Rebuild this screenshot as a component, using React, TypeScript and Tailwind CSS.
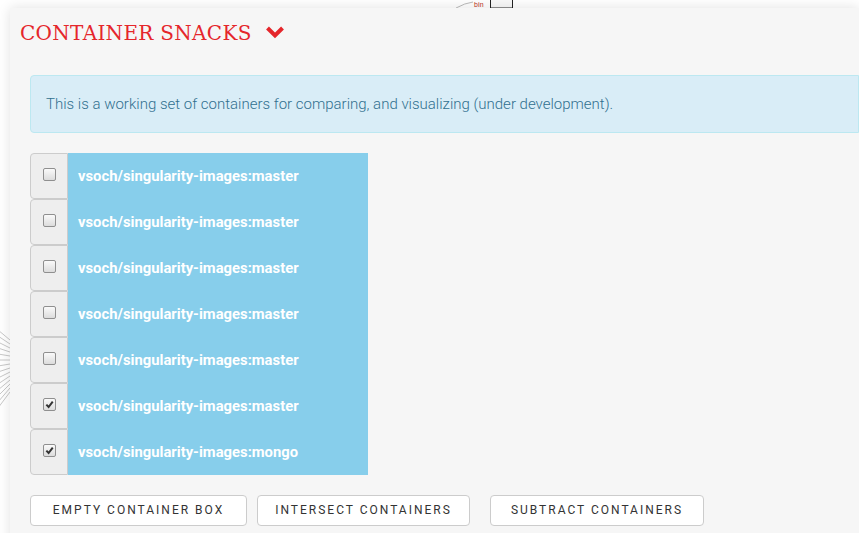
import React from "react";

const containers = [
  { name: "vsoch/singularity-images:master", checked: false },
  { name: "vsoch/singularity-images:master", checked: false },
  { name: "vsoch/singularity-images:master", checked: false },
  { name: "vsoch/singularity-images:master", checked: false },
  { name: "vsoch/singularity-images:master", checked: false },
  { name: "vsoch/singularity-images:master", checked: true },
  { name: "vsoch/singularity-images:mongo", checked: true },
];

function Box({ checked }: { checked: boolean }) {
  return (
    <span className="flex h-[13px] w-[13px] items-center justify-center rounded-[2px] border border-[#8f8f8f] bg-gradient-to-b from-[#fafafa] to-[#dcdcdc]">
      {checked && (
        <svg width="9" height="9" viewBox="0 0 10 10">
          <path d="M1.5 5.2 L4 7.8 L8.6 1.8" fill="none" stroke="#333" strokeWidth="2.2" />
        </svg>
      )}
    </span>
  );
}

export default function App() {
  return (
    <div className="relative h-[533px] w-[859px] overflow-hidden bg-white" style={{ fontFamily: "Roboto, 'Noto Sans', sans-serif" }}>
      {/* bits of the graph drawn behind the panel */}
      <svg className="absolute left-0 top-0" width="859" height="533">
        <path d="M456 8 Q465 3 473 2" stroke="#bbb" strokeWidth="1" fill="none" />
        <text x="474" y="6.5" fontSize="7" fill="#c0392b" fontFamily="Roboto">bin</text>
        <rect x="490.5" y="-4" width="22" height="12" fill="#f8f8f8" stroke="#222" strokeWidth="1" />
        {Array.from({ length: 14 }).map((_, i) => (
          <line key={i} x1="10" y1={340 + i * 4} x2="-2" y2={330 + i * 6} stroke="#c8c8c8" strokeWidth="1" />
        ))}
      </svg>

      <div className="relative ml-[10px] mt-[8px] h-[600px] bg-[#f6f6f6] pl-[10px] pt-[10px] shadow-[0_0_12px_rgba(0,0,0,0.12)]">
        <div className="flex items-center gap-[13px]">
          <h2 className="text-[20px] uppercase tracking-[0.3px] text-[#e5262b]" style={{ fontFamily: "'DejaVu Serif', 'Liberation Serif', serif" }}>
            Container Snacks
          </h2>
          <svg width="20" height="14" viewBox="0 0 20 14" className="mt-[-2px]">
            <path d="M2.5 3 L10 10.5 L17.5 3" fill="none" stroke="#e5262b" strokeWidth="4" />
          </svg>
        </div>

        <div className="ml-[10px] mt-[27px] flex h-[58px] items-center rounded-l-[4px] border border-[#bce8f1] bg-[#d9edf7] pl-[15px] text-[15px] font-light text-[#31708f]">
          This is a working set of containers for comparing, and visualizing (under development).
        </div>

        <div className="ml-[10px] mt-[20px] flex w-[338px] flex-col">
          {containers.map((c, i) => (
            <div key={i} className="flex h-[46px]">
              <div className="flex w-[38px] items-center justify-center rounded-l-[4px] border border-[#ccc] bg-[#eee] pb-[3px]">
                <Box checked={c.checked} />
              </div>
              <div className="flex flex-1 items-center bg-[#87ceeb] pl-[10px] text-[14.8px] font-bold text-white">
                {c.name}
              </div>
            </div>
          ))}
        </div>

        <div className="ml-[10px] mt-[20px] flex">
          <button className="h-[31px] w-[217px] rounded-[4px] border border-[#ccc] bg-white pb-[1px] text-[12px] uppercase tracking-[2px] text-[#333]">
            Empty Container Box
          </button>
          <button className="ml-[10px] h-[31px] w-[213px] rounded-[4px] border border-[#ccc] bg-white pb-[1px] text-[12px] uppercase tracking-[2px] text-[#333]">
            Intersect Containers
          </button>
          <button className="ml-[20px] h-[31px] w-[214px] rounded-[4px] border border-[#ccc] bg-white pb-[1px] text-[12px] uppercase tracking-[2px] text-[#333]">
            Subtract Containers
          </button>
        </div>
      </div>
    </div>
  );
}
